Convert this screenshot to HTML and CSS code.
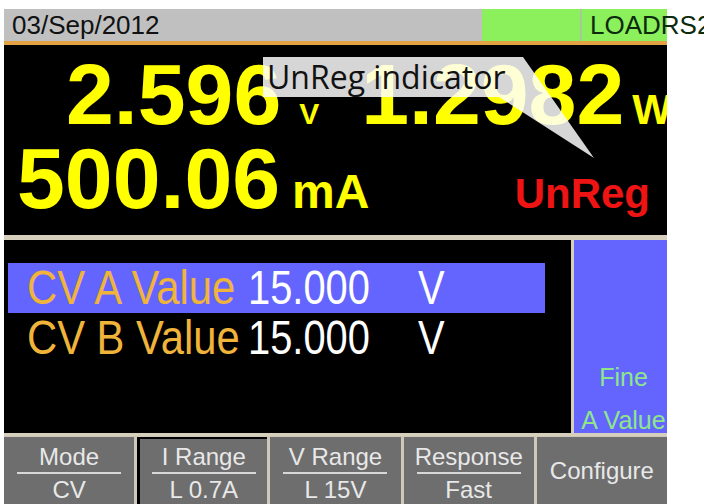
FILE: index.html
```html
<!DOCTYPE html>
<html>
<head>
    <title>LOADRS2</title>
    <link rel="stylesheet" href="styles.css">
</head>
<body>
    <div class="screen">
        <div class="status">
            <div class="date">03/Sep/2012</div>
            <div class="lamp"></div>
            <div class="model">LOADRS2</div>
        </div>

        <div class="readout">
            <div class="line first">
                <span class="big">2.596</span><span class="unit volt">V</span>
                <span class="big power">1.2982</span><span class="unit watt">W</span>
            </div>
            <div class="line second">
                <span class="big">500.06</span><span class="unit amp">mA</span>
                <span class="unreg">UnReg</span>
            </div>
            <!-- speech bubble pointing at the UnReg flag -->
            <div class="callout">
                <svg width="334" height="104" viewBox="0 0 334 104">
                    <polygon points="0,0 260,0 331,101 236,40 0,40" fill="#fff" fill-opacity="0.84"/>
                </svg>
                <span class="callout-text">UnReg indicator</span>
            </div>
        </div>

        <div class="lower">
            <div class="list">
                <div class="item selected">
                    <span class="label">CV A Value</span><span class="val">15.000</span><span class="val">V</span>
                </div>
                <div class="item">
                    <span class="label">CV B Value</span><span class="val">15.000</span><span class="val">V</span>
                </div>
            </div>
            <div class="side">
                <span>Fine</span>
                <span>A Value</span>
            </div>
        </div>

        <div class="softkeys">
            <div class="key"><span>Mode</span><i class="rule"></i><span>CV</span></div>
            <div class="key active"><span>I Range</span><i class="rule"></i><span>L 0.7A</span></div>
            <div class="key"><span>V Range</span><i class="rule"></i><span>L 15V</span></div>
            <div class="key"><span>Response</span><i class="rule"></i><span>Fast</span></div>
            <div class="key single"><span>Configure</span></div>
        </div>
    </div>
</body>
</html>
```

FILE: styles.css
```css
body {
    margin: 0;
    background: #fff;
    font-family: "Liberation Sans", Arial, sans-serif;
}
.screen {
    width: 663px;
    margin: 9px 0 0 4px;
}

/* top status bar */
.status {
    display: flex;
    height: 32px;
    background: #c0c0c0;
    border-bottom: 4px solid #e3a244;
    font-size: 26px;
    color: #111;
}
.date {
    flex: 1;
    padding: 1px 0 0 8px;
    line-height: 30px;
}
.lamp {
    width: 98px;
    background: #8cf05c;
}
.model {
    width: 77px;
    padding: 1px 0 0 8px;
    line-height: 30px;
    border-left: 2px solid #a8c89c;
    background: #8cf05c;
    white-space: nowrap;
    color: #0c2a0c;
}

/* measurement readout */
.readout {
    position: relative;
    height: 190px;
    box-sizing: border-box;
    padding-top: 7px;
    background: #000;
    color: #ffff00;
    font-weight: bold;
    overflow: hidden;
}
.line {
    display: flex;
    align-items: baseline;
    height: 84px;
    line-height: 84px;
    white-space: nowrap;
}
.line.first {
    padding-left: 62px;
}
.line.second {
    padding-left: 13px;
}
.big {
    font-size: 86px;
}
.unit {
    font-size: 30px;
}
.volt {
    margin-left: 18px;
}
.power {
    margin-left: 42px;
}
.watt {
    font-size: 42px;
    margin-left: 8px;
}
.amp {
    font-size: 48px;
    margin-left: 12px;
}
.unreg {
    margin-left: auto;
    padding-right: 17px;
    font-size: 42px;
    color: #ee1414;
}
.callout {
    position: absolute;
    left: 259px;
    top: 12px;
    width: 334px;
    height: 104px;
}
.callout svg {
    display: block;
}
.callout-text {
    position: absolute;
    left: 4px;
    top: 0;
    font-family: "Open Sans", sans-serif;
    font-weight: normal;
    font-size: 32px;
    line-height: 40px;
    color: #111;
}

/* setting list and side key */
.lower {
    display: flex;
    height: 193px;
    border-top: 5px solid #d6cfbb;
    border-bottom: 3px solid #d6cfbb;
}
.list {
    flex: 1;
    padding-top: 23px;
    background: #000;
}
.item {
    display: grid;
    grid-template-columns: 221px 170px auto;
    width: 537px;
    height: 50px;
    margin-left: 4px;
    padding-left: 19px;
    box-sizing: border-box;
    font-size: 48px;
    line-height: 50px;
    white-space: nowrap;
    color: #fff;
}
.item.selected {
    background: #6464ff;
}
/* the panel font is a condensed grotesque */
.label,
.val {
    display: inline-block;
    transform: scaleX(0.83);
    transform-origin: left center;
}
.label {
    transform: scaleX(0.87);
    color: #f0b43a;
}
.side {
    width: 96px;
    display: flex;
    flex-direction: column;
    justify-content: flex-end;
    align-items: center;
    gap: 18px;
    padding-left: 6px;
    box-sizing: border-box;
    border-left: 3px solid #d6cfbb;
    background: #6464ff;
    color: #8ee68a;
    font-size: 25px;
    line-height: 25px;
    white-space: nowrap;
    overflow: hidden;
}

/* soft keys along the bottom */
.softkeys {
    display: grid;
    grid-template-columns: repeat(5, 1fr);
    gap: 3px;
    height: 68px;
    padding-top: 1px;
    box-sizing: border-box;
    background: #cfc8b8;
}
.key {
    display: flex;
    flex-direction: column;
    align-items: center;
    padding-top: 8px;
    box-sizing: border-box;
    background: #6e6e6e;
    color: #e8e8e8;
    font-size: 24px;
    line-height: 24px;
}
.key.active {
    padding-top: 6px;
    border-top: 2px solid #000;
    border-left: 3px solid #000;
}
.key.single {
    justify-content: center;
    padding-top: 0;
}
.rule {
    width: 104px;
    height: 2px;
    margin: 3px 0 4px;
    background: #d8d8d8;
}
```
